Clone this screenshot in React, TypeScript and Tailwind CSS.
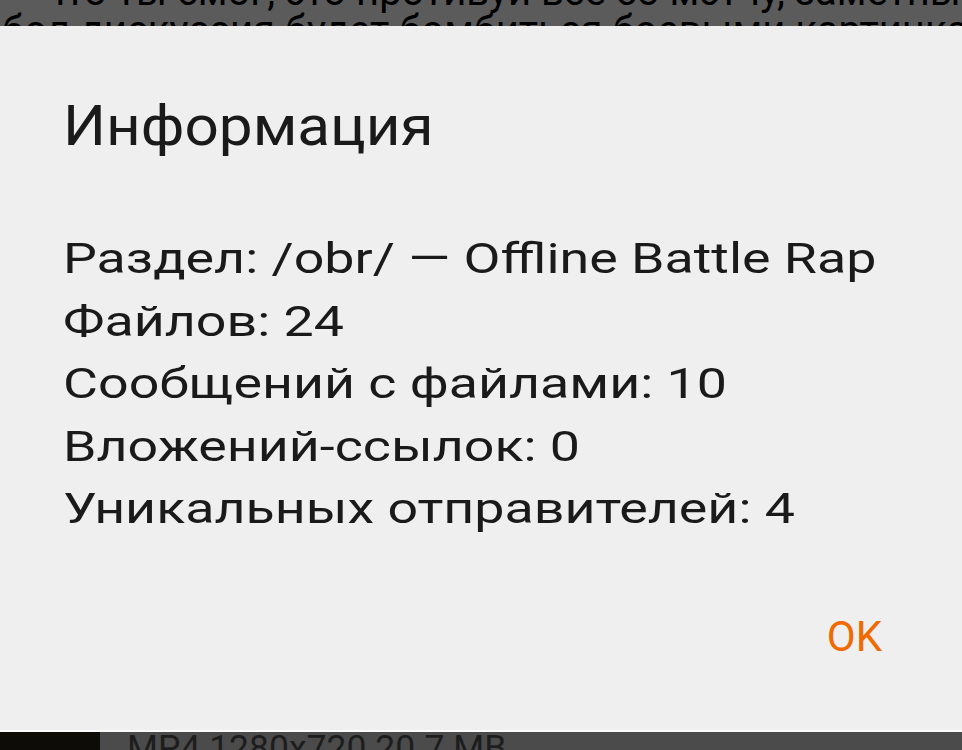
import React from "react";

export default function App() {
  const font = { fontFamily: "Roboto, 'Noto Sans', sans-serif" } as React.CSSProperties;
  return (
    <div
      className="relative w-[962px] h-[750px] overflow-hidden bg-[#5b5b5b]"
      style={font}
    >
      {/* background content, dimmed */}
      <div className="flex h-full flex-col">
        <div className="mt-[-28px] text-[40px] leading-[39px] text-black whitespace-nowrap">
          <div className="pl-[2px]">– Что ты смог, это противуй всё со мэтчу, заметный</div>
          <div className="pl-[2px]">бол дискуссия будет бомбиться боевыми картинками</div>
        </div>
        <div className="flex-1" />
        <div className="flex h-[18px] overflow-hidden bg-[#4b4b4b]">
          <div className="w-[100px] h-full bg-[#0e0c07]" />
          <div className="ml-[27px] mt-[-4px] text-[35.5px] leading-[41px] text-[#1d1d1d] whitespace-nowrap">
            MP4 1280x720 20.7 MB
          </div>
        </div>
      </div>

      {/* dialog */}
      <div className="absolute left-0 top-[26px] w-full h-[706px] bg-[#efefef] border-b-2 border-[#fbfbfb] flex flex-col pl-[63px] pt-[67px]">
        <div className="text-[56px] leading-[66px] text-[#1a1a1a] whitespace-nowrap origin-left scale-x-[1.076]">
          Информация
        </div>
        <div className="mt-[68px] text-[43px] leading-[62.5px] text-[#1a1a1a] whitespace-nowrap origin-left scale-x-[1.25]">
          <div>Раздел: /obr/ — Offline Battle Rap</div>
          <div>Файлов: 24</div>
          <div>Сообщений с файлами: 10</div>
          <div>Вложений-ссылок: 0</div>
          <div>Уникальных отправителей: 4</div>
        </div>
        <div className="mt-[72px] self-end pr-[80px] text-[42px] leading-[50px] text-[#f06a00]">
          OK
        </div>
      </div>
    </div>
  );
}
